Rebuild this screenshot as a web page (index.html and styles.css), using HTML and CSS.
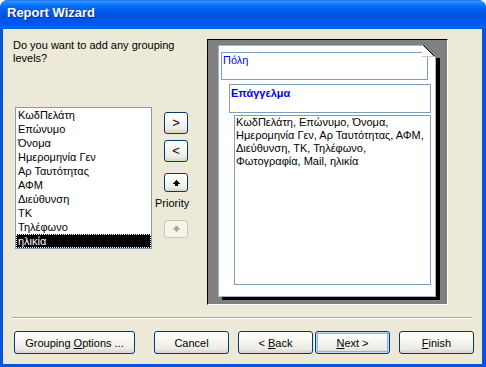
FILE: index.html
```html
<!DOCTYPE html>
<html lang="el">
<head>
  <meta charset="UTF-8">
  <title>Report Wizard</title>
  <link rel="stylesheet" href="styles.css">
</head>
<body>

  <div class="window">
    <div class="titlebar">Report Wizard</div>

    <div class="client">
      <div class="main">

        <div class="left">
          <p class="question">Do you want to add any grouping levels?</p>

          <div class="picker">
            <ul class="listbox">
              <li>ΚωδΠελάτη</li>
              <li>Επώνυμο</li>
              <li>Όνομα</li>
              <li>Ημερομηνία Γεν</li>
              <li>Αρ Ταυτότητας</li>
              <li>ΑΦΜ</li>
              <li>Διεύθυνση</li>
              <li>ΤΚ</li>
              <li>Τηλέφωνο</li>
              <li class="selected"><span>ηλικία</span></li>
            </ul>

            <div class="movers">
              <button class="btn mover">&gt;</button>
              <button class="btn mover gap-s">&lt;</button>
              <button class="btn mover arrow gap-l">
                <svg width="7" height="6" viewBox="0 0 7 6" shape-rendering="crispEdges"><path d="M3 0h1v1h1v1h1v1h1v1H5v2H2V4H0V3h1V2h1V1h1z" fill="#000"/></svg>
              </button>
              <span class="priority">Priority</span>
              <button class="btn mover arrow down" disabled>
                <svg width="7" height="6" viewBox="0 0 7 6" shape-rendering="crispEdges"><path d="M2 0h3v2h2v1H6v1H5v1H4v1H3V5H2V4H1V3H0V2h2z" fill="#aca899"/></svg>
              </button>
            </div>
          </div>
        </div>

        <div class="preview">
          <div class="page">
            <div class="level level-1">Πόλη</div>
            <div class="level level-2">Επάγγελμα</div>
            <div class="detail">
              ΚωδΠελάτη, Επώνυμο, Όνομα,<br>
              Ημερομηνία Γεν, Αρ Ταυτότητας, ΑΦΜ,<br>
              Διεύθυνση, ΤΚ, Τηλέφωνο,<br>
              Φωτογραφία, Mail, ηλικία
            </div>
            <!-- γωνία σελίδας -->
            <svg class="fold" width="18" height="14" viewBox="0 0 18 14" shape-rendering="crispEdges">
              <path d="M0 0H18V14H13Z" fill="#808080"/>
              <path d="M0 0L13 13L0 12Z" fill="#fff"/>
              <path d="M0.5 0.5L13 13" stroke="#000" fill="none" shape-rendering="auto"/>
              <path d="M0 12.5H13" stroke="#c8c8c8" fill="none"/>
            </svg>
          </div>
        </div>

      </div>

      <hr class="sep">

      <div class="footer">
        <button class="btn wide">Grouping <u>O</u>ptions ...</button>
        <button class="btn cancel">Cancel</button>
        <button class="btn back">&lt; <u>B</u>ack</button>
        <button class="btn next default"><u>N</u>ext &gt;</button>
        <button class="btn finish"><u>F</u>inish</button>
      </div>
    </div>
  </div>

</body>
</html>
```

FILE: styles.css
```css
* {
  box-sizing: border-box;
}
body {
  margin: 0;
  background: #fff;
  font-family: "Liberation Sans", "DejaVu Sans", sans-serif;
  font-size: 11px;
  color: #000;
}
.window {
  width: 486px;
  height: 367px;
  display: flex;
  flex-direction: column;
  padding: 0 4px 3px 3px;
  background: #0855dd;
  border-radius: 8px 8px 0 0;
}
.titlebar {
  height: 29px;
  margin: 0 -4px 0 -3px;
  padding: 5px 0 0 7px;
  line-height: 22px;
  font: bold 13px "Liberation Sans", sans-serif;
  color: #fff;
  text-shadow: 1px 1px 0 #0a2a8c;
  border-radius: 8px 8px 0 0;
  background: linear-gradient(to bottom,
    #0a5fe8 0, #3d95ff 1px, #2a8cff 2px, #127dff 4px, #036ffc 6px,
    #0262ee 9px, #0057e5 13px, #0054e3 18px, #0055eb 22px,
    #005bf5 25px, #026afe 27px, #0062ef 28px, #0052d6 29px);
}
.client {
  flex: 1;
  background: #ece9d8;
}
.main {
  display: flex;
  height: 288px;
  padding-top: 10px;
}
.left {
  width: 204px;
}
.question {
  margin: 0 0 0 10px;
  width: 175px;
  line-height: 13px;
}
.picker {
  display: flex;
  margin: 42px 0 0 12px;
}
.listbox {
  width: 137px;
  height: 142px;
  margin: 0;
  padding: 0;
  list-style: none;
  background: #fff;
  border: 1px solid #7f9db9;
}
.listbox li {
  height: 14px;
  line-height: 14px;
  padding-left: 2px;
  white-space: nowrap;
}
.listbox li.selected {
  background: #000;
  color: #fff;
  outline: 1px dotted #fffbe0;
  outline-offset: -1px;
}
.movers {
  display: flex;
  flex-direction: column;
  align-items: flex-start;
  margin-left: 3px;
  padding-top: 5px;
}
.btn {
  font: inherit;
  color: #000;
  padding: 0;
  border: 1px solid #003c74;
  border-radius: 3px;
  background: linear-gradient(to bottom, #fff 0%, #f7f6f1 40%, #ecebe4 80%, #d8d4c8 100%);
}
.btn:disabled {
  border-color: #c9c7ba;
  background: #f5f4ea;
}
.mover {
  width: 24px;
  height: 22px;
  margin-left: 9px;
  font-size: 13px;
  line-height: 18px;
}
.mover.gap-s {
  margin-top: 6px;
}
.mover.gap-l {
  margin-top: 11px;
}
.mover.arrow {
  height: 19px;
  display: flex;
  align-items: center;
  justify-content: center;
}
.mover.down {
  height: 18px;
  margin-top: 10px;
}
.priority {
  margin-top: 5px;
  line-height: 13px;
}
.preview {
  width: 241px;
  height: 266px;
  padding: 5px 0 0 10px;
  background: #808080;
  border: 1px solid;
  border-color: #000 #fff #fff #000;
}
.page {
  position: relative;
  width: 218px;
  height: 252px;
  background: #fff;
  border: 1px solid #a3b5cc;
  box-shadow: 4px 3px 0 #000;
}
.level {
  border: 1px solid #7f9db9;
  color: #0000ff;
  line-height: 13px;
  white-space: nowrap;
}
.level-1 {
  width: 207px;
  height: 28px;
  margin: 6px 0 0 2px;
  padding: 1px 0 0 1px;
}
.level-2 {
  width: 202px;
  height: 29px;
  margin: 4px 0 0 10px;
  padding: 2px 0 0 1px;
  font-weight: bold;
}
.detail {
  width: 197px;
  height: 170px;
  margin: 2px 0 0 15px;
  padding-left: 1px;
  line-height: 13px;
  border: 1px solid #7f9db9;
  white-space: nowrap;
}
.fold {
  position: absolute;
  top: -2px;
  right: -5px;
}
.sep {
  width: 460px;
  height: 0;
  margin: 0 0 0 9px;
  border: 0;
  border-top: 1px solid #aca899;
  border-bottom: 1px solid #fff;
}
.footer {
  display: flex;
  margin-top: 12px;
  padding-left: 11px;
}
.footer .btn {
  width: 75px;
  height: 23px;
}
.footer .wide {
  width: 121px;
}
.footer .cancel {
  margin-left: 19px;
}
.footer .back {
  margin-left: 9px;
}
.footer .next {
  margin-left: 2px;
}
.footer .finish {
  margin-left: 9px;
}
.btn.default {
  box-shadow: inset 0 0 0 1px #c2d9f7, inset 0 0 0 2px #8fb2ea;
}
```
